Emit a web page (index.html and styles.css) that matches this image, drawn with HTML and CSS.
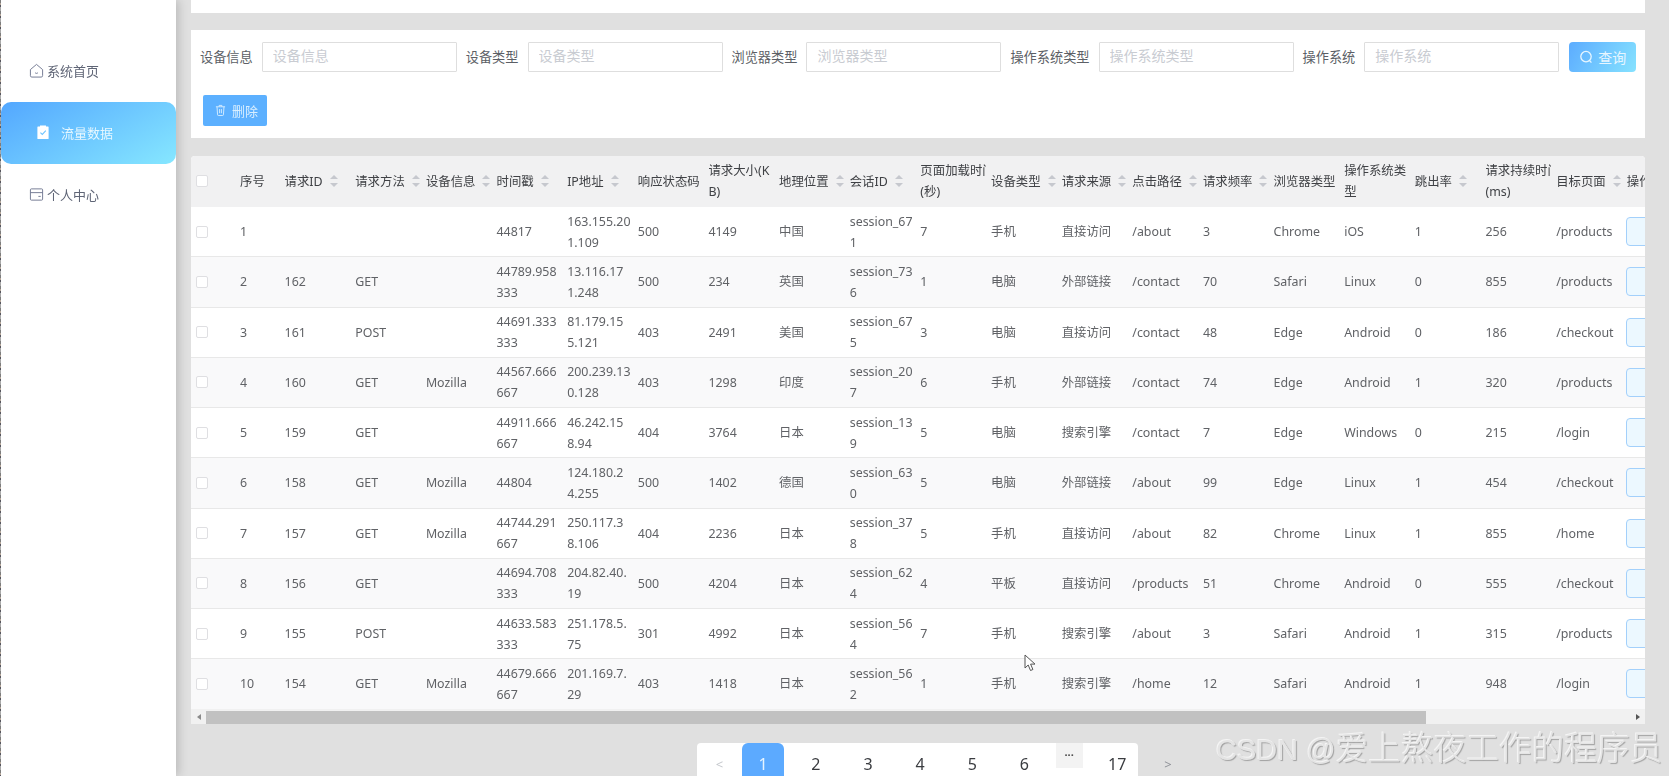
FILE: index.html
```html
<!DOCTYPE html>
<html lang="zh-CN">
<head>
<meta charset="utf-8">
<title>流量数据</title>
<link rel="stylesheet" href="styles.css">
</head>
<body>
<div class="app">
  <aside class="sidebar">
    <nav class="menu">
      <a class="menu-item">
        <svg class="menu-icon" viewBox="0 0 16 16" fill="none" stroke="#6f7690" stroke-width="1"><path d="M1.5 7 8 1.5 14.5 7v6.5a1.5 1.5 0 0 1-1.5 1.5H3a1.5 1.5 0 0 1-1.5-1.5z"/><path d="M6.5 10.5q1.5 1.2 3 0"/></svg>
        <span>系统首页</span>
      </a>
      <a class="menu-item active">
        <svg class="menu-icon-active" viewBox="0 0 12 14"><path fill="#fff" d="M1 1.5h2V0.5h6v1h2a.6.6 0 0 1 .6.6v11.3a.6.6 0 0 1-.6.6H1a.6.6 0 0 1-.6-.6V2.100A.6.6 0 0 1 1 1.500z"/><path fill="none" stroke="#6fc4ff" stroke-width="1.100" d="M3.400 7.600 5.300 9.400 8.800 5.600"/></svg>
        <span>流量数据</span>
      </a>
      <a class="menu-item">
        <svg class="menu-icon" viewBox="0 0 16 16" fill="none" stroke="#6f7690" stroke-width="1"><rect x="1.500" y="2" width="13" height="12" rx="1"/><path d="M1.500 6h13M10 10h2.500"/></svg>
        <span>个人中心</span>
      </a>
    </nav>
  </aside>

  <main class="main">
    <div class="top-card"></div>

    <section class="filter-card">
      <div class="filter-row">
        <label class="filter-label">设备信息</label><input class="filter-input" placeholder="设备信息">
        <label class="filter-label">设备类型</label><input class="filter-input" placeholder="设备类型">
        <label class="filter-label">浏览器类型</label><input class="filter-input" placeholder="浏览器类型">
        <label class="filter-label">操作系统类型</label><input class="filter-input" placeholder="操作系统类型">
        <label class="filter-label">操作系统</label><input class="filter-input" placeholder="操作系统">
        <button class="btn-search">
          <svg class="btn-icon" viewBox="0 0 14 14" fill="none" stroke="#e8f6ff" stroke-width="1.300"><circle cx="7" cy="6.600" r="5.200"/><path d="M10.400 10.400 12.400 12.600"/></svg>
          <span>查询</span>
        </button>
      </div>
      <div class="action-row">
        <button class="btn-delete">
          <svg class="btn-icon-small" viewBox="0 0 12 13" fill="none" stroke="#d8eeff" stroke-width="1"><path d="M1 3h10M4.500 3V1.500h3V3M2.200 3l.6 8.800a.8.8 0 0 0 .8.7h4.800a.8.8 0 0 0 .8-.7L9.800 3M5 5.500v4.500M7 5.500v4.500"/></svg>
          <span>删除</span>
        </button>
      </div>
    </section>

    <section class="table-card">
      <div class="table-clip">
        <table class="data-table">
          <colgroup>
            <col class="c-sel"><col class="c-idx">
            <col class="c-col"><col class="c-col"><col class="c-col"><col class="c-col"><col class="c-col">
            <col class="c-col"><col class="c-col"><col class="c-col"><col class="c-col"><col class="c-col">
            <col class="c-col"><col class="c-col"><col class="c-col"><col class="c-col"><col class="c-col">
            <col class="c-col"><col class="c-col"><col class="c-col"><col class="c-col"><col class="c-last">
          </colgroup>
          <thead>
            <tr>
              <th class="sel"><i class="check"></i></th>
              <th><div class="cell">序号</div></th>
              <th><div class="cell">请求ID<i class="sort"></i></div></th>
              <th><div class="cell">请求方法<i class="sort"></i></div></th>
              <th><div class="cell">设备信息<i class="sort"></i></div></th>
              <th><div class="cell">时间戳<i class="sort"></i></div></th>
              <th><div class="cell">IP地址<i class="sort"></i></div></th>
              <th><div class="cell">响应状态码</div></th>
              <th><div class="cell">请求大小(K<br>B)</div></th>
              <th><div class="cell">地理位置<i class="sort"></i></div></th>
              <th><div class="cell">会话ID<i class="sort"></i></div></th>
              <th><div class="cell">页面加载时间<br>(秒)</div></th>
              <th><div class="cell">设备类型<i class="sort"></i></div></th>
              <th><div class="cell">请求来源<i class="sort"></i></div></th>
              <th><div class="cell">点击路径<i class="sort"></i></div></th>
              <th><div class="cell">请求频率<i class="sort"></i></div></th>
              <th><div class="cell">浏览器类型</div></th>
              <th><div class="cell">操作系统类<br>型</div></th>
              <th><div class="cell">跳出率<i class="sort"></i></div></th>
              <th><div class="cell">请求持续时间<br>(ms)</div></th>
              <th><div class="cell">目标页面<i class="sort"></i></div></th>
              <th><div class="cell">操作</div></th>
            </tr>
          </thead>
          <tbody>
            <tr><td class="sel"><i class="check"></i></td><td>1</td><td></td><td></td><td></td><td>44817</td><td>163.155.20<br>1.109</td><td>500</td><td>4149</td><td>中国</td><td>session_67<br>1</td><td>7</td><td>手机</td><td>直接访问</td><td>/about</td><td>3</td><td>Chrome</td><td>iOS</td><td>1</td><td>256</td><td>/products</td><td><i class="op"></i></td></tr>
            <tr><td class="sel"><i class="check"></i></td><td>2</td><td>162</td><td>GET</td><td></td><td>44789.958<br>333</td><td>13.116.17<br>1.248</td><td>500</td><td>234</td><td>英国</td><td>session_73<br>6</td><td>1</td><td>电脑</td><td>外部链接</td><td>/contact</td><td>70</td><td>Safari</td><td>Linux</td><td>0</td><td>855</td><td>/products</td><td><i class="op"></i></td></tr>
            <tr><td class="sel"><i class="check"></i></td><td>3</td><td>161</td><td>POST</td><td></td><td>44691.333<br>333</td><td>81.179.15<br>5.121</td><td>403</td><td>2491</td><td>美国</td><td>session_67<br>5</td><td>3</td><td>电脑</td><td>直接访问</td><td>/contact</td><td>48</td><td>Edge</td><td>Android</td><td>0</td><td>186</td><td>/checkout</td><td><i class="op"></i></td></tr>
            <tr><td class="sel"><i class="check"></i></td><td>4</td><td>160</td><td>GET</td><td>Mozilla</td><td>44567.666<br>667</td><td>200.239.13<br>0.128</td><td>403</td><td>1298</td><td>印度</td><td>session_20<br>7</td><td>6</td><td>手机</td><td>外部链接</td><td>/contact</td><td>74</td><td>Edge</td><td>Android</td><td>1</td><td>320</td><td>/products</td><td><i class="op"></i></td></tr>
            <tr><td class="sel"><i class="check"></i></td><td>5</td><td>159</td><td>GET</td><td></td><td>44911.666<br>667</td><td>46.242.15<br>8.94</td><td>404</td><td>3764</td><td>日本</td><td>session_13<br>9</td><td>5</td><td>电脑</td><td>搜索引擎</td><td>/contact</td><td>7</td><td>Edge</td><td>Windows</td><td>0</td><td>215</td><td>/login</td><td><i class="op"></i></td></tr>
            <tr><td class="sel"><i class="check"></i></td><td>6</td><td>158</td><td>GET</td><td>Mozilla</td><td>44804</td><td>124.180.2<br>4.255</td><td>500</td><td>1402</td><td>德国</td><td>session_63<br>0</td><td>5</td><td>电脑</td><td>外部链接</td><td>/about</td><td>99</td><td>Edge</td><td>Linux</td><td>1</td><td>454</td><td>/checkout</td><td><i class="op"></i></td></tr>
            <tr><td class="sel"><i class="check"></i></td><td>7</td><td>157</td><td>GET</td><td>Mozilla</td><td>44744.291<br>667</td><td>250.117.3<br>8.106</td><td>404</td><td>2236</td><td>日本</td><td>session_37<br>8</td><td>5</td><td>手机</td><td>直接访问</td><td>/about</td><td>82</td><td>Chrome</td><td>Linux</td><td>1</td><td>855</td><td>/home</td><td><i class="op"></i></td></tr>
            <tr><td class="sel"><i class="check"></i></td><td>8</td><td>156</td><td>GET</td><td></td><td>44694.708<br>333</td><td>204.82.40.<br>19</td><td>500</td><td>4204</td><td>日本</td><td>session_62<br>4</td><td>4</td><td>平板</td><td>直接访问</td><td>/products</td><td>51</td><td>Chrome</td><td>Android</td><td>0</td><td>555</td><td>/checkout</td><td><i class="op"></i></td></tr>
            <tr><td class="sel"><i class="check"></i></td><td>9</td><td>155</td><td>POST</td><td></td><td>44633.583<br>333</td><td>251.178.5.<br>75</td><td>301</td><td>4992</td><td>日本</td><td>session_56<br>4</td><td>7</td><td>手机</td><td>搜索引擎</td><td>/about</td><td>3</td><td>Safari</td><td>Android</td><td>1</td><td>315</td><td>/products</td><td><i class="op"></i></td></tr>
            <tr><td class="sel"><i class="check"></i></td><td>10</td><td>154</td><td>GET</td><td>Mozilla</td><td>44679.666<br>667</td><td>201.169.7.<br>29</td><td>403</td><td>1418</td><td>日本</td><td>session_56<br>2</td><td>1</td><td>手机</td><td>搜索引擎</td><td>/home</td><td>12</td><td>Safari</td><td>Android</td><td>1</td><td>948</td><td>/login</td><td><i class="op"></i></td></tr>
          </tbody>
        </table>
      </div>
      <div class="scrollbar">
        <i class="arrow-left"></i>
        <div class="thumb"></div>
        <i class="arrow-right"></i>
      </div>
    </section>

    <div class="pagination">
      <div class="pager-box">
        <span class="pg-prev">&lt;</span>
        <span class="pg-num current">1</span>
        <span class="pg-num">2</span>
        <span class="pg-num">3</span>
        <span class="pg-num">4</span>
        <span class="pg-num">5</span>
        <span class="pg-num">6</span>
        <span class="pg-more">···</span>
        <span class="pg-num last">17</span>
      </div>
      <span class="pg-next">&gt;</span>
    </div>
  </main>

  <svg class="cursor" viewBox="0 0 12 18"><path d="M1 1v13l3.200-3 2.300 5.500 2.400-1-2.300-5.400H11z" fill="#fff" stroke="#555" stroke-width="1"/></svg>
  <div class="watermark"><span class="wm-latin">CSDN @</span>爱上熬夜工作的程序员</div>
</div>
</body>
</html>
```

FILE: styles.css
```css
* { box-sizing: border-box; }

html, body {
  margin: 0;
  height: 100%;
  overflow: hidden;
  background: #e0e0e0;
}

.app {
  position: relative;
  display: flex;
  width: 1669px;
  height: 776px;
  overflow: hidden;
  font-family: "Noto Sans", "Noto Sans CJK SC", sans-serif;
  color: #606266;
  filter: blur(0.35px);
}

/* Sidebar */
.sidebar {
  flex: 0 0 176px;
  height: 776px;
  background: repeating-linear-gradient(180deg, #7d7d7d 0 3px, #b5a79a 3px 5px, #55555e 5px 7px, #a8a8a8 7px 11px) 0 0 / 1px 100% no-repeat, #fff;
  box-shadow: 3px 0 9px rgba(0, 0, 0, 0.16);
  padding: 40px 0 0 1px;
  position: relative;
  z-index: 1;
}

.menu { display: flex; flex-direction: column; }

.menu-item {
  display: flex;
  align-items: center;
  gap: 3px;
  height: 62px;
  padding: 0 0 2px 28px;
  font-size: 13px;
  color: #5f6576;
}

.menu-item.active {
  gap: 12px;
  padding-left: 36px;
  border-radius: 10px;
  color: #e6f7ff;
  background: linear-gradient(150deg, #53a7ff 0%, #86e7ff 100%);
}

.menu-icon { width: 15px; height: 15px; }
.menu-icon-active { width: 12px; height: 14px; }

/* Main column */
.main {
  flex: 1;
  min-width: 0;
  padding: 0 24px 0 15px;
  display: flex;
  flex-direction: column;
}

.top-card {
  height: 12.5px;
  flex: none;
  background: #fff;
  margin-bottom: 17.5px;
}

.filter-card {
  flex: none;
  height: 108px;
  background: #fff;
  padding: 12px 9px;
  margin-bottom: 17.5px;
}

.filter-row { display: flex; align-items: center; height: 30px; }

.filter-label {
  font-size: 13.2px;
  margin-right: 9px;
  padding-bottom: 1px;
  color: #5c5f66;
  white-space: nowrap;
}

.filter-input {
  width: 195px;
  height: 30px;
  margin-right: 9px;
  padding: 0 10px 3px;
  border: 1.5px solid #dedede;
  border-radius: 1px;
  outline: none;
  background: #fff;
  font: 14px "Noto Sans", "Noto Sans CJK SC", sans-serif;
}

.filter-input::placeholder { color: #c9ccd2; }

.btn-search {
  display: flex;
  align-items: center;
  gap: 5px;
  width: 67px;
  height: 30px;
  margin-left: 1px;
  padding: 0 0 1px 10px;
  border: 0;
  border-radius: 4px;
  background: linear-gradient(120deg, #5cacff, #86e2ff);
  color: #e8f6ff;
  font: 14px "Noto Sans", "Noto Sans CJK SC", sans-serif;
}

.btn-icon { width: 14px; height: 14px; }

.action-row { margin-top: 23px; padding-left: 3px; }

.btn-delete {
  display: flex;
  align-items: center;
  gap: 6px;
  width: 64px;
  height: 31px;
  padding: 0 0 1px 12px;
  border: 0;
  border-radius: 2px;
  background: #5cb0ff;
  color: #d8eeff;
  font: 13px "Noto Sans", "Noto Sans CJK SC", sans-serif;
}

.btn-icon-small { width: 11px; height: 12px; }

/* Table */
.table-card {
  flex: none;
  height: 568.5px;
  background: #fff;
  border-radius: 4px 4px 0 0;
  overflow: hidden;
}

.table-clip { height: 553px; overflow: hidden; }

.data-table {
  table-layout: fixed;
  width: 1576px;
  border-collapse: separate;
  border-spacing: 0;
  font-size: 12.4px;
}

.c-sel { width: 39px; }
.c-idx { width: 44.6px; }
.c-col { width: 70.65px; }
.c-last { width: 150px; }

.data-table th {
  height: 51.5px;
  padding: 0 0 0 10px;
  background: #f1f1f2;
  font-weight: 400;
  text-align: left;
  color: #3f4145;
  line-height: 21px;
}

.data-table td {
  height: 50.25px;
  padding: 0 0 0 10px;
  line-height: 21px;
  white-space: nowrap;
  border-bottom: 1px solid #e8e8e8;
  color: #606266;
}

.data-table tbody tr:nth-child(even) td { background: #f9f9fa; }

.data-table .sel { padding-left: 5px; }

.cell {
  display: flex;
  flex-wrap: wrap;
  align-items: center;
  width: 66px;
  overflow: hidden;
  white-space: nowrap;
}

.cell br { flex-basis: 100%; }

.check {
  display: block;
  width: 12px;
  height: 12px;
  background: #fff;
  border: 1px solid #dfdfe2;
  border-radius: 2px;
}

.sort {
  position: relative;
  display: block;
  flex: none;
  width: 9px;
  height: 12px;
  margin-left: 7px;
}

.sort::before,
.sort::after {
  content: "";
  position: absolute;
  left: 0;
  border-left: 4.5px solid transparent;
  border-right: 4.5px solid transparent;
}

.sort::before { top: 0; border-bottom: 4.5px solid #c6c8ce; }
.sort::after { bottom: 0; border-top: 4.5px solid #c6c8ce; }

.op {
  display: block;
  width: 60px;
  height: 29px;
  margin-left: -1px;
  background: #ecf8ff;
  border: 1px solid #a3d0fb;
  border-radius: 4px;
}

/* Horizontal scrollbar */
.scrollbar {
  display: flex;
  align-items: center;
  height: 15px;
  margin-top: 0.5px;
  background: #f1f1f1;
}

.arrow-left,
.arrow-right { display: block; width: 0; height: 0; border-top: 3.5px solid transparent; border-bottom: 3.5px solid transparent; }

.arrow-left { margin-left: 6px; border-right: 4px solid #8a8a8a; }
.arrow-right { margin-left: 210px; border-left: 4px solid #555; }

.thumb {
  width: 1219.5px;
  height: 13px;
  margin: 1px 0 0 5px;
  background: #c1c1c1;
}

/* Pagination */
.pagination {
  flex: none;
  display: flex;
  align-items: flex-start;
  margin: 19px 0 0 506px;
  font-size: 16px;
}

.pager-box {
  display: flex;
  align-items: flex-start;
  height: 42px;
  width: 441px;
  background: #fff;
  border-radius: 4px;
}

.pg-prev,
.pg-next {
  display: block;
  font-size: 13px;
  line-height: 42px;
  color: #c4c7cc;
  text-align: center;
}

.pg-prev { width: 45.5px; }
.pg-next { width: 60px; color: #8f9298; }

.pg-num {
  width: 42px;
  margin-right: 10.7px;
  line-height: 42px;
  text-align: center;
  color: #3a3c40;
  border-radius: 6px;
}

.pg-num.current { width: 43px; background: #5caaff; color: #e6f4ff; }
.pg-num.last { margin: 0 0 0 14px; }

.pg-more {
  width: 27px;
  height: 25px;
  background: #f3f3f3;
  font-size: 11px;
  font-weight: 700;
  line-height: 24px;
  text-align: center;
  color: #4a4a4a;
}

/* Overlays */
.cursor {
  position: absolute;
  left: 1024px;
  top: 654px;
  width: 12px;
  height: 18px;
}

.watermark {
  position: absolute;
  left: 1216px;
  top: 723px;
  font-family: "Noto Sans CJK SC", sans-serif;
  font-size: 32.7px;
  font-weight: 300;
  line-height: 46px;
  white-space: nowrap;
  color: #e4e4e4;
  text-shadow: -1px -1px 0 #f4f4f4, 1px 1px 1px #a0a0a0;
}

.wm-latin {
  font-family: "Liberation Sans", sans-serif;
  font-size: 29px;
}
```
